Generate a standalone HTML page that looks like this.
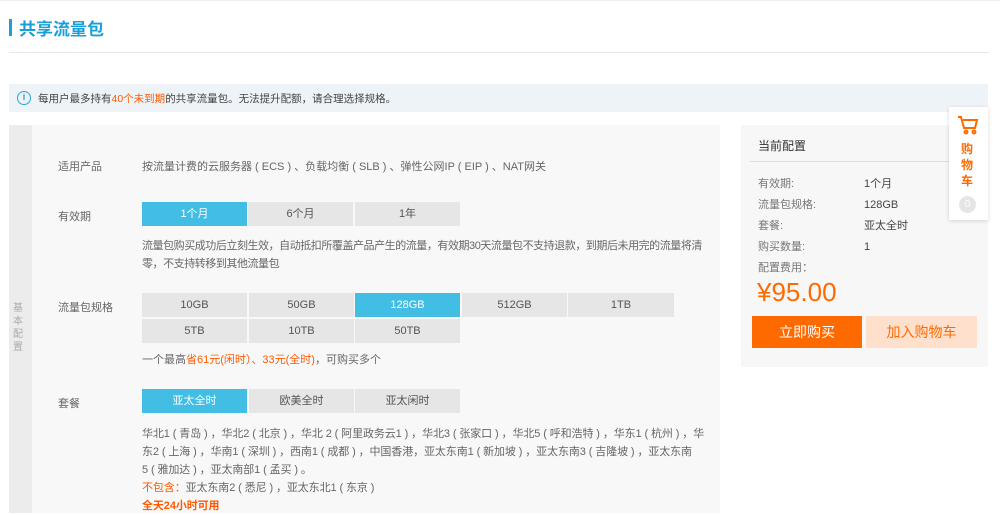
<!DOCTYPE html><html><head><meta charset="utf-8"><style>
*{margin:0;padding:0;box-sizing:border-box}
body{width:1000px;height:513px;overflow:hidden;background:#fff;font-family:"Liberation Sans","Noto Sans CJK SC",sans-serif;font-size:11px;color:#666;position:relative}
.a{position:absolute;white-space:nowrap}
.opt{position:absolute;height:24px;line-height:24px;text-align:center;background:#e6e6e6;color:#555;font-size:11px}
.sel{background:#42bde3;color:#fff}
.o{color:#ff5a00}
</style></head><body>
<div class="a" style="left:0;top:0;width:1000px;height:1px;background:#eee"></div>
<div class="a" style="left:9px;top:19px;width:3px;height:17px;background:#1aa0d8"></div>
<div class="a" style="left:19px;top:15px;font-size:17px;color:#1aa0d8;font-weight:bold">共享流量包</div>
<div class="a" style="left:9px;top:52px;width:980px;height:1px;background:#e8e8e8"></div>
<div class="a" style="left:9px;top:84px;width:979px;height:28px;background:#eef3f8"></div>
<div class="a" style="left:17px;top:91px;width:14px;height:14px;border:1.5px solid #2aa4dc;border-radius:50%;color:#2aa4dc;font-size:9px;line-height:11px;text-align:center;font-weight:bold">i</div>
<div class="a" style="left:38px;top:91px;font-size:10.5px;color:#444">每用户最多持有<span class="o">40个未到期</span>的共享流量包。无法提升配额，请合理选择规格。</div>

<div class="a" style="left:9px;top:125px;width:711px;height:388px;background:#f8f8f8"></div>
<div class="a" style="left:9px;top:125px;width:23px;height:388px;background:#ececec"></div>
<div class="a" style="left:13px;top:302px;width:12px;font-size:10px;line-height:13px;color:#aaa;white-space:normal">基本配置</div>

<div class="a" style="left:58px;top:158px">适用产品</div>
<div class="a" style="left:142px;top:158px">按流量计费的云服务器 ( ECS ) 、负载均衡 ( SLB ) 、弹性公网IP ( EIP ) 、NAT网关</div>
<div class="a" style="left:58px;top:208px">有效期</div>
<div class="opt sel" style="left:142px;top:202px;width:105px">1个月</div>
<div class="opt" style="left:248px;top:202px;width:105px">6个月</div>
<div class="opt" style="left:355px;top:202px;width:105px">1年</div>
<div class="a" style="left:142px;top:237px;line-height:18px;font-size:11px;letter-spacing:-0.45px">流量包购买成功后立刻生效，自动抵扣所覆盖产品产生的流量，有效期30天流量包不支持退款，到期后未用完的流量将清<br>零，不支持转移到其他流量包</div>

<div class="a" style="left:58px;top:299px">流量包规格</div>
<div class="opt" style="left:142px;top:293px;width:105px">10GB</div>
<div class="opt" style="left:249px;top:293px;width:105px">50GB</div>
<div class="opt sel" style="left:355px;top:293px;width:105px">128GB</div>
<div class="opt" style="left:462px;top:293px;width:105px">512GB</div>
<div class="opt" style="left:568px;top:293px;width:106px">1TB</div>
<div class="opt" style="left:142px;top:319px;width:105px">5TB</div>
<div class="opt" style="left:249px;top:319px;width:105px">10TB</div>
<div class="opt" style="left:355px;top:319px;width:105px">50TB</div>
<div class="a" style="left:142px;top:351px">一个最高<span class="o">省61元(闲时）、33元(全时)</span>，可购买多个</div>

<div class="a" style="left:58px;top:395px">套餐</div>
<div class="opt sel" style="left:142px;top:389px;width:105px">亚太全时</div>
<div class="opt" style="left:249px;top:389px;width:105px">欧美全时</div>
<div class="opt" style="left:355px;top:389px;width:105px">亚太闲时</div>
<div class="a" style="left:142px;top:425px;line-height:18px;font-size:11px;letter-spacing:-0.1px">华北1 ( 青岛 ) ，华北2 ( 北京 ) ，华北 2 ( 阿里政务云1 ) ，华北3 ( 张家口 ) ，华北5 ( 呼和浩特 ) ，华东1 ( 杭州 ) ，华<br>东2 ( 上海 ) ，华南1 ( 深圳 ) ，西南1 ( 成都 ) ，中国香港，亚太东南1 ( 新加坡 ) ，亚太东南3 ( 吉隆坡 ) ，亚太东南<br>5 ( 雅加达 ) ，亚太南部1 ( 孟买 ) 。<br><span class="o">不包含：</span>亚太东南2 ( 悉尼 ) ，亚太东北1 ( 东京 )<br><span class="o" style="font-weight:bold">全天24小时可用</span></div>

<div class="a" style="left:741px;top:125px;width:247px;height:242px;background:#f7f7f7"></div>
<div class="a" style="left:758px;top:137px;font-size:12px;color:#333">当前配置</div>
<div class="a" style="left:750px;top:161px;width:210px;height:1px;background:#ddd"></div>
<div class="a" style="left:758px;top:174px;line-height:21px;color:#777;white-space:normal">有效期:<br>流量包规格:<br>套餐:<br>购买数量:</div>
<div class="a" style="left:864px;top:174px;line-height:21px;color:#444;white-space:normal">1个月<br>128GB<br>亚太全时<br>1</div>
<div class="a" style="left:758px;top:259px;color:#777">配置费用：</div>
<div class="a" style="left:757px;top:277px;font-size:26px;color:#ff6a00">¥95.00</div>
<div class="a" style="left:752px;top:316px;width:110px;height:32px;background:#ff6a00;color:#fff;font-size:14px;line-height:32px;text-align:center">立即购买</div>
<div class="a" style="left:866px;top:316px;width:111px;height:32px;background:#ffe0cc;color:#ff6a00;font-size:14px;line-height:32px;text-align:center">加入购物车</div>

<div class="a" style="left:949px;top:107px;width:39px;height:113px;background:#fff;box-shadow:0 1px 4px rgba(0,0,0,.15)"></div>
<svg class="a" style="left:957px;top:114px" width="22" height="22" viewBox="0 0 22 22" fill="none" stroke="#ff6a00" stroke-width="2"><path d="M1 3h3l3 11h11l2-8H6"/><circle cx="9" cy="18" r="1.5"/><circle cx="17" cy="18" r="1.5"/></svg>
<div class="a" style="left:961px;top:141px;width:14px;font-size:12px;line-height:16px;color:#ff6a00;font-weight:bold;white-space:normal">购物车</div>
<div class="a" style="left:959px;top:196px;width:17px;height:17px;border-radius:50%;background:#e5e5e5;color:#fff;font-size:10px;line-height:17px;text-align:center">0</div>
</body></html>
